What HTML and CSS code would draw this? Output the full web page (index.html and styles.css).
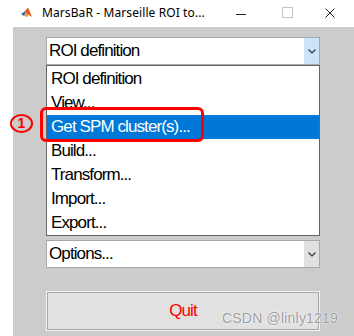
FILE: index.html
```html
<!DOCTYPE html>
<html>
<head>
<meta charset="utf-8">
<link rel="stylesheet" href="styles.css">
</head>
<body>
<div class="titlebar">
  <svg class="app-icon" width="11" height="11" viewBox="0 0 11 11">
    <polygon points="0,7 3.5,4.5 5,6 3,9" fill="#2f6fb3"/>
    <polygon points="3.5,4.5 7,0.5 11,10 8,8 5,6" fill="#e8561c"/>
    <polygon points="7,0.5 9,5 11,10 8.5,4" fill="#c0311a"/>
    <polygon points="3,9 5,6 8,8 6,10" fill="#f0a030"/>
  </svg>
  <span class="title">MarsBaR - Marseille ROI to...</span>
  <div class="controls">
    <span class="ctl min"></span>
    <span class="ctl max"></span>
    <svg class="ctl close" width="10" height="10" viewBox="0 0 10 10"><path d="M0.5 0.5 L9.5 9.5 M9.5 0.5 L0.5 9.5" stroke="#222" stroke-width="1"/></svg>
  </div>
</div>
<div class="client">
  <div class="combo open">
    <span class="combo-text">ROI definition</span>
    <span class="combo-btn"><svg width="8" height="5" viewBox="0 0 8 5"><path d="M0.5 0.5 L4 4 L7.5 0.5" fill="none" stroke="#333" stroke-width="1.2"/></svg></span>
  </div>
  <ul class="list">
    <li>ROI definition</li>
    <li>View...</li>
    <li class="sel">Get SPM cluster(s)...</li>
    <li>Build...</li>
    <li>Transform...</li>
    <li>Import...</li>
    <li>Export...</li>
  </ul>
  <div class="combo second">
    <span class="combo-text">Options...</span>
    <span class="combo-btn"><svg width="8" height="5" viewBox="0 0 8 5"><path d="M0.5 0.5 L4 4 L7.5 0.5" fill="none" stroke="#333" stroke-width="1.2"/></svg></span>
  </div>
  <button class="quit">Quit</button>
</div>
<div class="mark-box"></div>
<div class="mark-num">1</div>
<div class="watermark">CSDN @linly1219</div>
</body>
</html>
```
FILE: styles.css
```css
html, body {
  margin: 0;
  padding: 0;
  background: #ffffff;
  width: 354px;
  height: 336px;
  overflow: hidden;
  position: relative;
}
.titlebar {
  height: 27px;
  display: flex;
  align-items: center;
  background: #ffffff;
  font-family: "Noto Sans", "DejaVu Sans", sans-serif;
}
.app-icon {
  margin-left: 21px;
  margin-top: -2px;
}
.title {
  margin-left: 10px;
  font-size: 12px;
  color: #000;
  margin-top: -2px;
  letter-spacing: 0.1px;
}
.controls {
  margin-left: auto;
  display: flex;
  align-items: center;
  height: 27px;
}
.ctl { display: block; }
.min {
  width: 10px;
  height: 1px;
  background: #222;
  margin-right: 36px;
  margin-top: 1px;
}
.max {
  width: 9px;
  height: 9px;
  border: 1px solid #c4c4c4;
  margin-right: 32px;
  margin-top: -2px;
}
.close {
  margin-right: 19px;
  margin-top: -2px;
}
.client {
  margin-left: 13px;
  height: 309px;
  background: #cccccc;
  box-sizing: border-box;
  padding: 10px 0 0 33px;
  font-family: "Liberation Sans", Arial, sans-serif;
  font-size: 17px;
  letter-spacing: -0.9px;
}
.combo {
  width: 274px;
  height: 28px;
  box-sizing: border-box;
  border: 1px solid #a8a8a8;
  background: #fff;
  display: flex;
}
.combo-text {
  flex: 1;
  padding-left: 2px;
  line-height: 26px;
  color: #000;
}
.combo-btn {
  width: 15px;
  background: #cce4f7;
  display: flex;
  align-items: center;
  justify-content: center;
}
.combo.second .combo-btn { background: #e1e1e1; }
.list {
  list-style: none;
  margin: 0;
  padding: 1px 0 0 0;
  width: 274px;
  box-sizing: border-box;
  border: 1px solid #646464;
  background: #fff;
}
.list li {
  height: 24px;
  line-height: 24px;
  padding-left: 4px;
  color: #000;
}
.list li.sel {
  background: #0078d7;
  color: #fff;
}
.combo.second { margin-top: 4px; }
.quit {
  display: block;
  margin: 23px 0 0 0;
  width: 274px;
  height: 40px;
  box-sizing: border-box;
  border: 1px solid #f4f4f4;
  box-shadow: inset 0 0 0 1px #a6a6a6;
  background: #e1e1e1;
  color: #ff0000;
  font-family: "Liberation Sans", Arial, sans-serif;
  font-size: 17px;
  letter-spacing: -0.9px;
  padding: 0;
}
.mark-box {
  position: absolute;
  left: 40px;
  top: 107px;
  width: 164px;
  height: 35px;
  box-sizing: border-box;
  border: 3.5px solid #ff0000;
  border-radius: 6px;
}
.mark-num {
  position: absolute;
  left: 10px;
  top: 114px;
  width: 23px;
  height: 19px;
  box-sizing: border-box;
  border: 2.5px solid #ff0000;
  border-radius: 50%;
  color: #ff0000;
  font-family: "Liberation Sans", Arial, sans-serif;
  font-weight: bold;
  font-size: 14px;
  line-height: 14px;
  text-align: center;
}
.watermark {
  position: absolute;
  left: 222px;
  top: 310px;
  font-family: "Liberation Sans", Arial, sans-serif;
  font-size: 14px;
  letter-spacing: 0.2px;
  color: #9c9c9c;
  text-shadow: 0 0 2px #ffffff, 0 0 1px #ffffff;
}
```
